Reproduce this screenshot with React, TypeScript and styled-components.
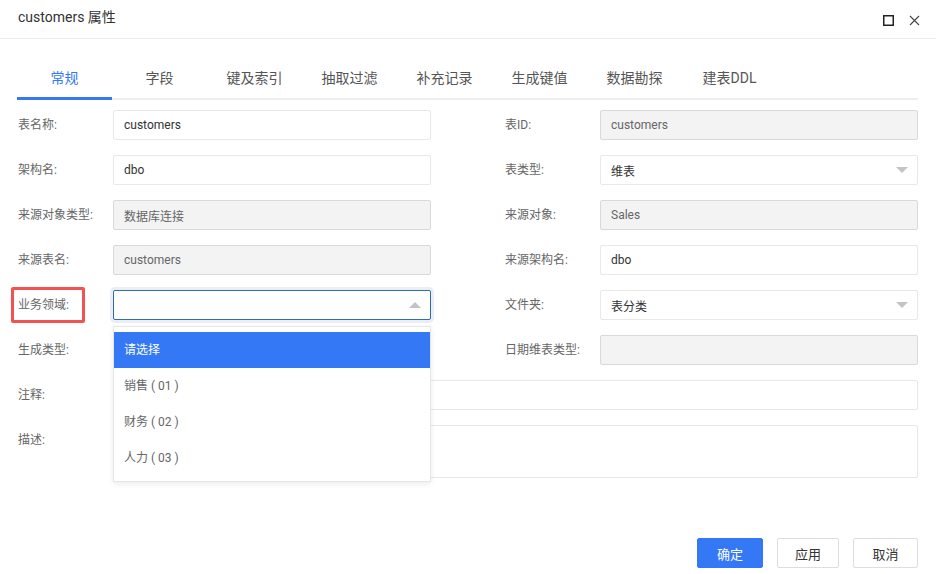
import React from 'react';
import styled, { createGlobalStyle } from 'styled-components';

const GlobalStyle = createGlobalStyle`
  html, body {
    margin: 0;
    padding: 0;
    background: #fff;
  }
  body {
    font-family: Roboto, "Noto Sans CJK SC", sans-serif;
    color: #333;
  }
  *, *::before, *::after {
    box-sizing: border-box;
  }
`;

const Dialog = styled.div`
  width: 936px;
  height: 574px;
  display: flex;
  flex-direction: column;
  background: #fff;
`;

const Header = styled.div`
  height: 39px;
  display: flex;
  align-items: center;
  justify-content: space-between;
  padding: 0 16px 0 18px;
  border-bottom: 1px solid #ececec;
`;

const Title = styled.div`
  font-size: 14px;
  line-height: 20px;
  color: #333;
  margin-top: -4px;
`;

const HeaderTools = styled.div`
  display: flex;
  align-items: center;
  gap: 15px;
  margin-top: 2px;
`;

const ToolButton = styled.span`
  display: inline-flex;
  width: 11px;
  height: 11px;
  cursor: pointer;
`;

const Body = styled.div`
  flex: 1;
  display: flex;
  flex-direction: column;
  padding: 0 18px 0 17px;
`;

const TabBar = styled.div`
  margin-top: 20px;
  display: flex;
  border-bottom: 2px solid #eeeeee;
`;

const Tab = styled.div<{ $active?: boolean }>`
  position: relative;
  width: 95px;
  height: 39px;
  line-height: 39px;
  text-align: center;
  font-size: 14px;
  color: ${(p) => (p.$active ? '#3478f6' : '#555')};
  cursor: pointer;

  &:after {
    content: '';
    display: ${(p) => (p.$active ? 'block' : 'none')};
    position: absolute;
    left: 0;
    right: 0;
    bottom: -2px;
    height: 3px;
    background: #3478f6;
  }
`;

const Form = styled.div`
  margin-top: 10px;
  display: grid;
  grid-template-columns: 414px 1fr;
  column-gap: 73px;
  row-gap: 15px;
`;

const Field = styled.div<{ $wide?: boolean; $top?: boolean }>`
  position: relative;
  display: flex;
  align-items: ${(p) => (p.$top ? 'flex-start' : 'center')};
  grid-column: ${(p) => (p.$wide ? '1 / -1' : 'auto')};
`;

const Label = styled.label<{ $marked?: boolean }>`
  position: relative;
  flex: 0 0 96px;
  padding-left: 1px;
  font-size: 12px;
  line-height: 30px;
  color: #666;
  white-space: nowrap;

  &:after {
    content: '';
    display: ${(p) => (p.$marked ? 'block' : 'none')};
    position: absolute;
    left: -6px;
    top: -3px;
    width: 74px;
    height: 36px;
    border: 3px solid #f25252;
    border-radius: 2px;
  }
`;

const Box = styled.div<{ $disabled?: boolean; $focused?: boolean; $tall?: boolean }>`
  position: relative;
  flex: 1;
  height: ${(p) => (p.$tall ? '53px' : '30px')};
  padding: 0 10px;
  display: flex;
  align-items: center;
  font-size: 12px;
  color: ${(p) => (p.$disabled ? '#666' : '#333')};
  background: ${(p) => (p.$disabled ? '#f3f3f3' : '#fff')};
  border: 1px solid ${(p) => (p.$focused ? '#2e6db4' : p.$disabled ? '#d9d9d9' : '#e8e8e8')};
  border-radius: 2px;
  box-shadow: ${(p) => (p.$focused ? '0 0 0 3px #eaeef5' : 'none')};
`;

const Caret = styled.span<{ $up?: boolean }>`
  position: absolute;
  right: 9px;
  top: 50%;
  margin-top: -3px;
  width: 0;
  height: 0;
  border-left: 6px solid transparent;
  border-right: 6px solid transparent;
  ${(p) => (p.$up ? 'border-bottom: 6px solid #c4c4c4;' : 'border-top: 6px solid #c4c4c4;')}
`;

const Menu = styled.div`
  position: absolute;
  left: 96px;
  top: 36px;
  width: 318px;
  padding: 5px 0;
  background: #fff;
  border: 1px solid #e6e6e6;
  box-shadow: 0 2px 6px rgba(0, 0, 0, 0.08);
  z-index: 10;
`;

const Option = styled.div<{ $selected?: boolean }>`
  height: 36px;
  line-height: 36px;
  padding-left: 10px;
  font-size: 12px;
  color: ${(p) => (p.$selected ? '#fff' : '#666')};
  background: ${(p) => (p.$selected ? '#3478f6' : '#fff')};
  cursor: pointer;
`;

const Footer = styled.div`
  margin-top: auto;
  display: flex;
  justify-content: flex-end;
  gap: 14px;
  padding: 0 18px 6px 0;
`;

const Button = styled.button<{ $primary?: boolean; $w: number }>`
  width: ${(p) => p.$w}px;
  height: 30px;
  font-family: inherit;
  font-size: 13px;
  border-radius: 2px;
  cursor: pointer;
  color: ${(p) => (p.$primary ? '#fff' : '#333')};
  background: ${(p) => (p.$primary ? '#3478f6' : '#fff')};
  border: 1px solid ${(p) => (p.$primary ? '#3478f6' : '#dedede')};
`;

type Row = {
  label: string;
  value?: string;
  disabled?: boolean;
  select?: boolean;
};

const leftRows: Row[] = [
  { label: '表名称:', value: 'customers' },
  { label: '架构名:', value: 'dbo' },
  { label: '来源对象类型:', value: '数据库连接', disabled: true },
  { label: '来源表名:', value: 'customers', disabled: true },
];

const rightRows: Row[] = [
  { label: '表ID:', value: 'customers', disabled: true },
  { label: '表类型:', value: '维表', select: true },
  { label: '来源对象:', value: 'Sales', disabled: true },
  { label: '来源架构名:', value: 'dbo' },
];

const tabs = ['常规', '字段', '键及索引', '抽取过滤', '补充记录', '生成键值', '数据勘探', '建表DDL'];
const options = ['请选择', '销售 ( 01 )', '财务 ( 02 )', '人力 ( 03 )'];

const FieldRow = ({ row }: { row: Row }) => (
  <Field>
    <Label>{row.label}</Label>
    <Box $disabled={row.disabled}>
      {row.value}
      {row.select && <Caret />}
    </Box>
  </Field>
);

export default function App() {
  return (
    <>
      <GlobalStyle />
      <Dialog>
        <Header>
          <Title>customers 属性</Title>
          <HeaderTools>
            <ToolButton title="最大化">
              <svg width="11" height="11" viewBox="0 0 11 11">
                <rect x="0.75" y="0.75" width="9.5" height="9.5" fill="none" stroke="#222" strokeWidth="1.5" />
              </svg>
            </ToolButton>
            <ToolButton title="关闭">
              <svg width="11" height="11" viewBox="0 0 11 11">
                <path d="M1 1 L10 10 M10 1 L1 10" stroke="#444" strokeWidth="1.1" />
              </svg>
            </ToolButton>
          </HeaderTools>
        </Header>
        <Body>
          <TabBar>
            {tabs.map((t, i) => (
              <Tab key={t} $active={i === 0}>
                {t}
              </Tab>
            ))}
          </TabBar>
          <Form>
            {leftRows.map((row, i) => (
              <React.Fragment key={row.label}>
                <FieldRow row={row} />
                <FieldRow row={rightRows[i]} />
              </React.Fragment>
            ))}
            <Field>
              <Label $marked>业务领域:</Label>
              <Box $focused>
                <Caret $up />
              </Box>
              <Menu>
                {options.map((o, i) => (
                  <Option key={o} $selected={i === 0}>
                    {o}
                  </Option>
                ))}
              </Menu>
            </Field>
            <FieldRow row={{ label: '文件夹:', value: '表分类', select: true }} />
            <FieldRow row={{ label: '生成类型:' }} />
            <FieldRow row={{ label: '日期维表类型:', disabled: true }} />
            <Field $wide>
              <Label>注释:</Label>
              <Box />
            </Field>
            <Field $wide $top>
              <Label>描述:</Label>
              <Box $tall />
            </Field>
          </Form>
        </Body>
        <Footer>
          <Button $primary $w={66}>确定</Button>
          <Button $w={62}>应用</Button>
          <Button $w={65}>取消</Button>
        </Footer>
      </Dialog>
    </>
  );
}
